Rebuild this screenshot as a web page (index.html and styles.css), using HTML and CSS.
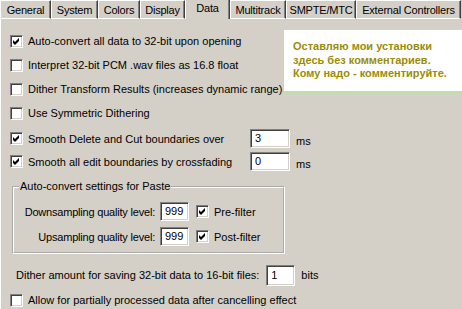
FILE: index.html
```html
<!DOCTYPE html>
<html lang="en">
<head>
  <meta charset="UTF-8">
  <title>Settings - Data</title>
  <link rel="stylesheet" href="styles.css">
</head>
<body>
  <div class="dialog">
    <div class="tabs">
      <div class="tab">General</div>
      <div class="tab">System</div>
      <div class="tab">Colors</div>
      <div class="tab">Display</div>
      <div class="tab active">Data</div>
      <div class="tab">Multitrack</div>
      <div class="tab">SMPTE/MTC</div>
      <div class="tab">External Controllers</div>
    </div>

    <div class="panel">
      <label class="row">
        <span class="check on"><svg viewBox="0 0 11 11"><polygon points="2,4 4,6 8,2 8,5 4,9 2,7"/></svg></span>
        Auto-convert all data to 32-bit upon opening
      </label>
      <label class="row">
        <span class="check"></span>
        Interpret 32-bit PCM .wav files as 16.8 float
      </label>
      <label class="row">
        <span class="check"></span>
        Dither Transform Results (increases dynamic range)
      </label>
      <label class="row">
        <span class="check"></span>
        Use Symmetric Dithering
      </label>

      <div class="row-field first">
        <label class="row">
          <span class="check on"><svg viewBox="0 0 11 11"><polygon points="2,4 4,6 8,2 8,5 4,9 2,7"/></svg></span>
          Smooth Delete and Cut boundaries over
        </label>
        <div class="field wide">3</div>
        <span class="unit">ms</span>
      </div>
      <div class="row-field">
        <label class="row">
          <span class="check on"><svg viewBox="0 0 11 11"><polygon points="2,4 4,6 8,2 8,5 4,9 2,7"/></svg></span>
          Smooth all edit boundaries by crossfading
        </label>
        <div class="field wide">0</div>
        <span class="unit">ms</span>
      </div>

      <fieldset class="group">
        <legend>Auto-convert settings for Paste</legend>
        <div class="group-grid">
          <span class="group-label">Downsampling quality level:</span>
          <div class="field">999</div>
          <label class="row">
            <span class="check on"><svg viewBox="0 0 11 11"><polygon points="2,4 4,6 8,2 8,5 4,9 2,7"/></svg></span>
            Pre-filter
          </label>
          <span class="group-label">Upsampling quality level:</span>
          <div class="field">999</div>
          <label class="row">
            <span class="check on"><svg viewBox="0 0 11 11"><polygon points="2,4 4,6 8,2 8,5 4,9 2,7"/></svg></span>
            Post-filter
          </label>
        </div>
      </fieldset>

      <div class="dither">
        <span>Dither amount for saving 32-bit data to 16-bit files:</span>
        <div class="field">1</div>
        <span class="bits">bits</span>
      </div>

      <label class="row last">
        <span class="check"></span>
        Allow for partially processed data after cancelling effect
      </label>

      <!-- sticky comment -->
      <div class="note">
        Оставляю мои установки<br>
        здесь без комментариев.<br>
        Кому надо - комментируйте.
      </div>
    </div>
  </div>
</body>
</html>
```

FILE: styles.css
```css
* { margin: 0; padding: 0; box-sizing: border-box; }
body {
  background: #d4d0c8;
  color: #000;
  font-family: 'Liberation Sans', Arial, sans-serif;
  font-size: 11px;
  width: 462px;
  height: 309px;
  overflow: hidden;
}
/* Tabs */
.tabs {
  display: flex;
  height: 19px;
}
.tab {
  flex: none;
  height: 19px;
  line-height: 18px;
  text-align: center;
  white-space: nowrap;
  letter-spacing: -0.2px;
  border-top: 1px solid #fff;
  border-left: 1px solid #fff;
  border-right: 1px solid #404040;
  border-bottom: 1px solid #fff;
  box-shadow: inset -1px 0 #808080;
}
.tab:nth-child(1) { width: 51px; }
.tab:nth-child(2) { width: 47px; }
.tab:nth-child(3) { width: 42px; }
.tab:nth-child(4) { width: 45px; }
.tab:nth-child(5) { width: 45px; }
.tab:nth-child(6) { width: 56px; }
.tab:nth-child(7) { width: 70px; }
.tab:nth-child(8) { width: 105px; }
.tab.active {
  border-top: none;
  border-bottom: none;
  line-height: 17px;
}
/* Panel */
.panel {
  position: relative;
  height: 290px;
  border-left: 1px solid #fff;
  padding: 10px 0 0 9px;
}
.row {
  display: flex;
  align-items: center;
  gap: 5px;
  height: 24px;
  white-space: nowrap;
}
.check {
  flex: none;
  width: 13px;
  height: 13px;
  background: #fff;
  border: 1px solid;
  border-color: #808080 #fff #fff #808080;
  box-shadow: inset 1px 1px #404040, inset -1px -1px #d4d0c8;
  display: flex;
}
.check svg {
  width: 11px;
  height: 11px;
  fill: #000;
}
.field {
  height: 19px;
  background: #fff;
  border: 1px solid;
  border-color: #808080 #fff #fff #808080;
  box-shadow: inset 1px 1px #404040, inset -1px -1px #d4d0c8;
  padding: 0 4px;
  line-height: 17px;
  width: 29px;
}
.field.wide { width: 40px; }
.row-field {
  display: grid;
  grid-template-columns: 234px 40px auto;
  align-items: center;
  column-gap: 6px;
  height: 23px;
}
.row-field.first { margin-top: 2px; }
.row-field .row { height: 23px; }
.unit { padding-top: 5px; }
/* Group box */
.group {
  margin: 7px 0 0 2px;
  width: 273px;
  border: 2px groove #fff;
  padding: 6px 0 3px 8px;
}
.group legend {
  margin-left: -3px;
  padding: 0 1px;
  line-height: 13px;
}
.group-grid {
  display: grid;
  grid-template-columns: 133px 29px auto;
  column-gap: 5px;
  align-items: center;
}
.group-grid .row { margin-left: 2px; height: 25px; }
.group-label {
  text-align: right;
  white-space: nowrap;
  letter-spacing: -0.2px;
}
.dither {
  display: flex;
  align-items: center;
  gap: 5px;
  height: 24px;
  margin: 9px 0 0 6px;
  white-space: nowrap;
}
.dither .field { height: 21px; line-height: 19px; width: 29px; margin-left: 2px; }
.dither .bits { margin-left: 1px; }
.row.last { margin-top: 1px; }
/* Sticky comment */
.note {
  position: absolute;
  left: 283px;
  top: 11px;
  width: 180px;
  height: 61px;
  background: #fff;
  box-shadow: 0 3px 3px #bfe0a8;
  padding: 10px 0 0 9px;
  color: #9a8c07;
  font-weight: bold;
  font-size: 11px;
  line-height: 13.5px;
}
```
